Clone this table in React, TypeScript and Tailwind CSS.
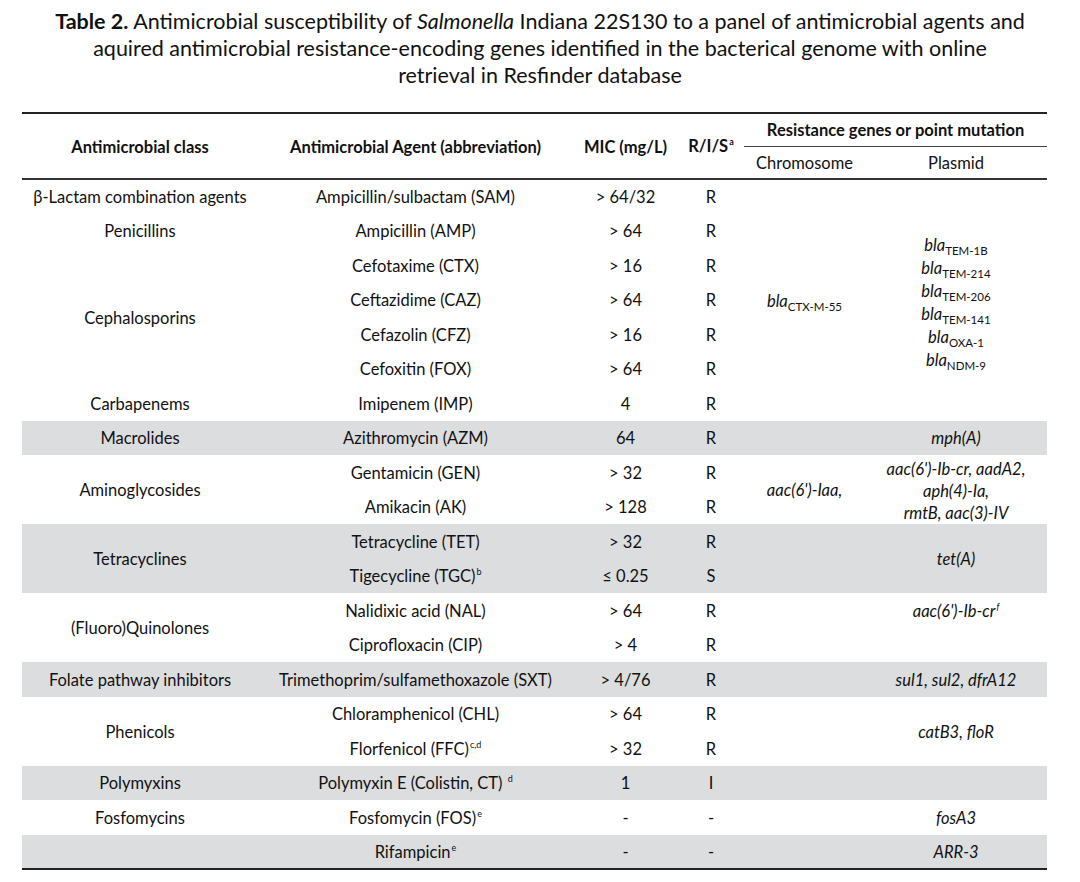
const GRAY = "bg-[#dcdddf]";

function Bla({ sub }: { sub: string }) {
  return (
    <span className="whitespace-nowrap">
      <i>bla</i>
      <sub className="text-[11.5px] not-italic bottom-[-4px]">{sub}</sub>
    </span>
  );
}

function Sup({ children }: { children: React.ReactNode }) {
  return <sup className="text-[9px] top-[-7px] ml-[1px]">{children}</sup>;
}

function Td({
  children,
  rowSpan,
  colSpan,
  className = "",
}: {
  children?: React.ReactNode;
  rowSpan?: number;
  colSpan?: number;
  className?: string;
}) {
  return (
    <td
      rowSpan={rowSpan}
      colSpan={colSpan}
      className={`p-0 text-center align-middle whitespace-nowrap ${className}`}
    >
      {children}
    </td>
  );
}

const ROW = "h-[34.5px]";

export default function App() {
  return (
    <div className="w-[1080px] h-[882px] bg-white text-[#111] font-['Lato',sans-serif] overflow-hidden">
      <div className="pt-[8px] text-center text-[21.5px] leading-[27px] whitespace-nowrap">
        <div>
          <b>Table 2.</b> Antimicrobial susceptibility of <i>Salmonella</i> Indiana 22S130 to a panel of
          antimicrobial agents and
        </div>
        <div>aquired antimicrobial resistance-encoding genes identified in the bacterical genome with online</div>
        <div>retrieval in Resfinder database</div>
      </div>

      <table className="ml-[22px] mt-[23px] w-[1025px] table-fixed border-collapse border-t-2 border-b-2 border-[#222] text-[16.5px]">
        <colgroup>
          <col className="w-[236px]" />
          <col className="w-[315px]" />
          <col className="w-[105px]" />
          <col className="w-[66px]" />
          <col className="w-[121px]" />
          <col className="w-[182px]" />
        </colgroup>
        <thead>
          <tr className="h-[33px]">
            <Td rowSpan={2} className="font-bold pt-[2px]">Antimicrobial class</Td>
            <Td rowSpan={2} className="font-bold pt-[2px]">Antimicrobial Agent (abbreviation)</Td>
            <Td rowSpan={2} className="font-bold pt-[2px]">MIC (mg/L)</Td>
            <Td rowSpan={2} className="font-bold">
              R/I/S<Sup>a</Sup>
            </Td>
            <Td colSpan={2} className="font-bold border-b border-[#444] pt-[2px]">
              Resistance genes or point mutation
            </Td>
          </tr>
          <tr className="h-[33px] border-b-2 border-[#333]">
            <Td className="pt-[3px]">Chromosome</Td>
            <Td className="pt-[3px]">Plasmid</Td>
          </tr>
        </thead>
        <tbody className="[&_td]:pt-[2px]">
          <tr className={ROW}>
            <Td>β-Lactam combination agents</Td>
            <Td>Ampicillin/sulbactam (SAM)</Td>
            <Td>&gt; 64/32</Td>
            <Td>R</Td>
            <Td rowSpan={7}>
              <Bla sub="CTX-M-55" />
            </Td>
            <Td rowSpan={7} className="leading-[23px]">
              <div className="pt-[4px]">
                <div><Bla sub="TEM-1B" /></div>
                <div><Bla sub="TEM-214" /></div>
                <div><Bla sub="TEM-206" /></div>
                <div><Bla sub="TEM-141" /></div>
                <div><Bla sub="OXA-1" /></div>
                <div><Bla sub="NDM-9" /></div>
              </div>
            </Td>
          </tr>
          <tr className={ROW}>
            <Td>Penicillins</Td>
            <Td>Ampicillin (AMP)</Td>
            <Td>&gt; 64</Td>
            <Td>R</Td>
          </tr>
          <tr className={ROW}>
            <Td rowSpan={4}>Cephalosporins</Td>
            <Td>Cefotaxime (CTX)</Td>
            <Td>&gt; 16</Td>
            <Td>R</Td>
          </tr>
          <tr className={ROW}>
            <Td>Ceftazidime (CAZ)</Td>
            <Td>&gt; 64</Td>
            <Td>R</Td>
          </tr>
          <tr className={ROW}>
            <Td>Cefazolin (CFZ)</Td>
            <Td>&gt; 16</Td>
            <Td>R</Td>
          </tr>
          <tr className={ROW}>
            <Td>Cefoxitin (FOX)</Td>
            <Td>&gt; 64</Td>
            <Td>R</Td>
          </tr>
          <tr className={ROW}>
            <Td>Carbapenems</Td>
            <Td>Imipenem (IMP)</Td>
            <Td>4</Td>
            <Td>R</Td>
          </tr>

          <tr className={`${ROW} ${GRAY}`}>
            <Td>Macrolides</Td>
            <Td>Azithromycin (AZM)</Td>
            <Td>64</Td>
            <Td>R</Td>
            <Td />
            <Td className="italic">mph(A)</Td>
          </tr>

          <tr className={ROW}>
            <Td rowSpan={2}>Aminoglycosides</Td>
            <Td>Gentamicin (GEN)</Td>
            <Td>&gt; 32</Td>
            <Td>R</Td>
            <Td rowSpan={2} className="italic">aac(6')-Iaa,</Td>
            <Td rowSpan={2} className="italic leading-[22px]">
              <div>aac(6')-Ib-cr, aadA2,</div>
              <div>aph(4)-Ia,</div>
              <div>rmtB, aac(3)-IV</div>
            </Td>
          </tr>
          <tr className={ROW}>
            <Td>Amikacin (AK)</Td>
            <Td>&gt; 128</Td>
            <Td>R</Td>
          </tr>

          <tr className={`${ROW} ${GRAY}`}>
            <Td rowSpan={2}>Tetracyclines</Td>
            <Td>Tetracycline (TET)</Td>
            <Td>&gt; 32</Td>
            <Td>R</Td>
            <Td rowSpan={2} />
            <Td rowSpan={2} className="italic">tet(A)</Td>
          </tr>
          <tr className={`${ROW} ${GRAY}`}>
            <Td>
              Tigecycline (TGC)<Sup>b</Sup>
            </Td>
            <Td>≤ 0.25</Td>
            <Td>S</Td>
          </tr>

          <tr className={ROW}>
            <Td rowSpan={2}>(Fluoro)Quinolones</Td>
            <Td>Nalidixic acid (NAL)</Td>
            <Td>&gt; 64</Td>
            <Td>R</Td>
            <Td />
            <Td className="italic">
              aac(6')-Ib-cr<Sup>f</Sup>
            </Td>
          </tr>
          <tr className={ROW}>
            <Td>Ciprofloxacin (CIP)</Td>
            <Td>&gt; 4</Td>
            <Td>R</Td>
            <Td />
            <Td />
          </tr>

          <tr className={`${ROW} ${GRAY}`}>
            <Td>Folate pathway inhibitors</Td>
            <Td>Trimethoprim/sulfamethoxazole (SXT)</Td>
            <Td>&gt; 4/76</Td>
            <Td>R</Td>
            <Td />
            <Td className="italic">sul1, sul2, dfrA12</Td>
          </tr>

          <tr className={ROW}>
            <Td rowSpan={2}>Phenicols</Td>
            <Td>Chloramphenicol (CHL)</Td>
            <Td>&gt; 64</Td>
            <Td>R</Td>
            <Td rowSpan={2} />
            <Td rowSpan={2} className="italic">catB3, floR</Td>
          </tr>
          <tr className={ROW}>
            <Td>
              Florfenicol (FFC)<Sup>c,d</Sup>
            </Td>
            <Td>&gt; 32</Td>
            <Td>R</Td>
          </tr>

          <tr className={`${ROW} ${GRAY}`}>
            <Td>Polymyxins</Td>
            <Td>
              Polymyxin E (Colistin, CT) <Sup>d</Sup>
            </Td>
            <Td>1</Td>
            <Td>I</Td>
            <Td />
            <Td />
          </tr>

          <tr className={ROW}>
            <Td>Fosfomycins</Td>
            <Td>
              Fosfomycin (FOS)<Sup>e</Sup>
            </Td>
            <Td>-</Td>
            <Td>-</Td>
            <Td />
            <Td className="italic">fosA3</Td>
          </tr>

          <tr className={`${ROW} ${GRAY}`}>
            <Td />
            <Td>
              Rifampicin<Sup>e</Sup>
            </Td>
            <Td>-</Td>
            <Td>-</Td>
            <Td />
            <Td className="italic">ARR-3</Td>
          </tr>
        </tbody>
      </table>
    </div>
  );
}
